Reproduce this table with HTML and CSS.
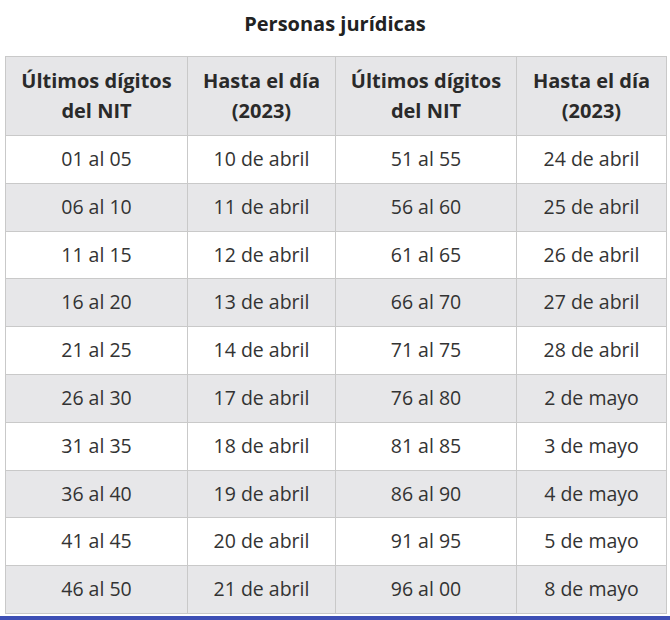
FILE: index.html
```html
<!DOCTYPE html>
<html lang="es">
<head>
<meta charset="utf-8">
<link rel="stylesheet" href="styles.css">
</head>
<body>
<div class="page">
  <h3 class="title">Personas jurídicas</h3>
  <table class="tbl">
    <colgroup>
      <col class="c1"><col class="c2"><col class="c3"><col class="c4">
    </colgroup>
    <thead>
      <tr><th>Últimos dígitos del NIT</th><th>Hasta el día (2023)</th><th>Últimos dígitos del NIT</th><th>Hasta el día (2023)</th></tr>
    </thead>
    <tbody>
      <tr><td>01 al 05</td><td>10 de abril</td><td>51 al 55</td><td>24 de abril</td></tr>
      <tr><td>06 al 10</td><td>11 de abril</td><td>56 al 60</td><td>25 de abril</td></tr>
      <tr><td>11 al 15</td><td>12 de abril</td><td>61 al 65</td><td>26 de abril</td></tr>
      <tr><td>16 al 20</td><td>13 de abril</td><td>66 al 70</td><td>27 de abril</td></tr>
      <tr><td>21 al 25</td><td>14 de abril</td><td>71 al 75</td><td>28 de abril</td></tr>
      <tr><td>26 al 30</td><td>17 de abril</td><td>76 al 80</td><td>2 de mayo</td></tr>
      <tr><td>31 al 35</td><td>18 de abril</td><td>81 al 85</td><td>3 de mayo</td></tr>
      <tr><td>36 al 40</td><td>19 de abril</td><td>86 al 90</td><td>4 de mayo</td></tr>
      <tr><td>41 al 45</td><td>20 de abril</td><td>91 al 95</td><td>5 de mayo</td></tr>
      <tr><td>46 al 50</td><td>21 de abril</td><td>96 al 00</td><td>8 de mayo</td></tr>
    </tbody>
  </table>
  <div class="bar"></div>
</div>
</body>
</html>
```
FILE: styles.css
```css
html, body {
  margin: 0;
  padding: 0;
  background: #fff;
}
.page {
  width: 670px;
  font-family: "Open Sans", "DejaVu Sans", sans-serif;
  color: #333;
}
.title {
  margin: 0;
  padding: 10px 0 0;
  height: 56px;
  box-sizing: border-box;
  text-align: center;
  font-size: 20px;
  font-weight: 700;
  line-height: 28px;
  color: #222;
}
.tbl {
  margin: 0 5px;
  width: 661px;
  border-collapse: collapse;
  table-layout: fixed;
  font-size: 19.5px;
  line-height: 28.8px;
}
.c1 { width: 182px; }
.c2 { width: 148px; }
.c3 { width: 181px; }
.c4 { width: 150px; }
.tbl th, .tbl td {
  border: 1px solid #c9c9c9;
  text-align: center;
  padding: 9px 4px;
}
.tbl th {
  background: #e6e6e8;
  font-weight: 700;
  font-size: 20px;
  line-height: 30px;
  color: #2a2a2a;
  padding: 9px 8px;
}
.tbl tbody tr:nth-child(even) td {
  background: #e7e7e9;
}
.bar {
  margin-top: 2px;
  height: 4px;
  background: #3d4fb5;
}
```
